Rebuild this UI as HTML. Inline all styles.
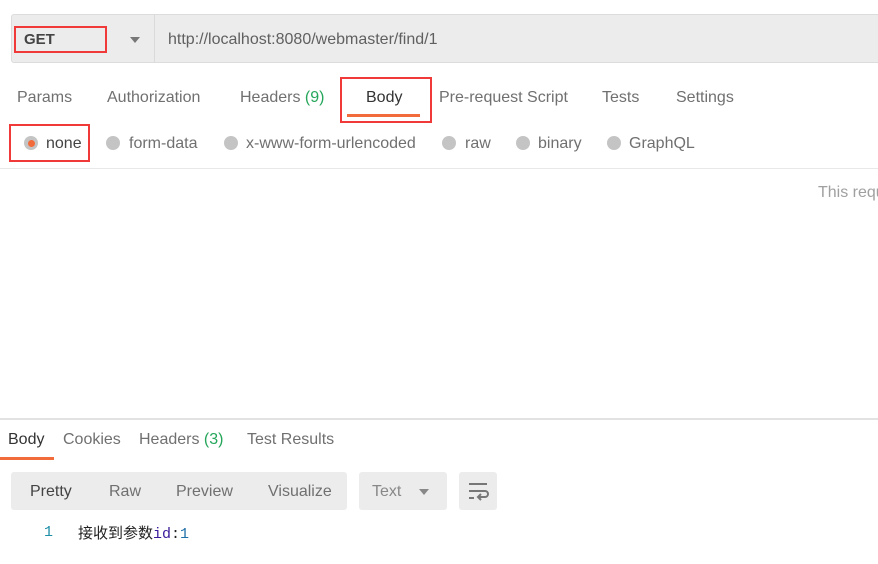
<!DOCTYPE html>
<html><head><meta charset="utf-8"><style>
body{margin:0;width:878px;height:564px;overflow:hidden;background:#fff;font-family:"Liberation Sans","Noto Sans CJK SC",sans-serif;color:#505050;position:relative}
.a{position:absolute;white-space:nowrap}
.t{font-size:16px;color:#707070}
.rb{position:absolute;border:2px solid #f03a3a;box-sizing:border-box}
.rad{position:absolute;width:14px;height:14px;border-radius:50%;background:#c4c4c4}
.g{color:#26a65b}
</style></head><body>
<div class="a" style="left:11px;top:14px;width:880px;height:49px;background:#ececec;border:1px solid #dcdcdc;border-radius:3px;box-sizing:border-box"></div>
<div class="a" style="left:154px;top:15px;width:1px;height:47px;background:#dadada"></div>
<div class="a" style="left:24px;top:31px;font-size:15px;font-weight:bold;color:#444">GET</div>
<div class="rb" style="left:14px;top:26px;width:93px;height:27px"></div>
<div class="a" style="left:130px;top:37px;width:0;height:0;border-left:5px solid transparent;border-right:5px solid transparent;border-top:6px solid #777"></div>
<div class="a" style="left:168px;top:31px;font-size:16px;color:#606060">http://localhost:8080/webmaster/find/1</div>

<div class="a t" style="left:17px;top:89px">Params</div>
<div class="a t" style="left:107px;top:89px">Authorization</div>
<div class="a t" style="left:240px;top:89px">Headers <span class="g">(9)</span></div>
<div class="a t" style="left:366px;top:89px;color:#333">Body</div>
<div class="a" style="left:347px;top:114px;width:73px;height:3px;background:#f26b3a"></div>
<div class="rb" style="left:340px;top:77px;width:92px;height:46px"></div>
<div class="a t" style="left:439px;top:89px">Pre-request Script</div>
<div class="a t" style="left:602px;top:89px">Tests</div>
<div class="a t" style="left:676px;top:89px">Settings</div>

<div class="rad" style="left:24px;top:136px"></div>
<div class="a" style="left:28px;top:140px;width:7px;height:7px;border-radius:50%;background:#f26b3a"></div>
<div class="a t" style="left:46px;top:135px;color:#444">none</div>
<div class="rb" style="left:9px;top:124px;width:81px;height:38px"></div>
<div class="rad" style="left:106px;top:136px"></div><div class="a t" style="left:129px;top:135px">form-data</div>
<div class="rad" style="left:224px;top:136px"></div><div class="a t" style="left:246px;top:135px">x-www-form-urlencoded</div>
<div class="rad" style="left:442px;top:136px"></div><div class="a t" style="left:465px;top:135px">raw</div>
<div class="rad" style="left:516px;top:136px"></div><div class="a t" style="left:538px;top:135px">binary</div>
<div class="rad" style="left:607px;top:136px"></div><div class="a t" style="left:629px;top:135px">GraphQL</div>
<div class="a" style="left:0;top:168px;width:878px;height:1px;background:#e8e8e8"></div>
<div class="a" style="left:818px;top:184px;font-size:16px;color:#a0a0a0">This requ</div>

<div class="a" style="left:0;top:418px;width:878px;height:2px;background:#e2e2e2"></div>
<div class="a t" style="left:8px;top:431px;color:#333">Body</div>
<div class="a" style="left:0;top:457px;width:54px;height:3px;background:#f26b3a"></div>
<div class="a t" style="left:63px;top:431px">Cookies</div>
<div class="a t" style="left:139px;top:431px">Headers <span class="g">(3)</span></div>
<div class="a t" style="left:247px;top:431px">Test Results</div>

<div class="a" style="left:11px;top:472px;width:336px;height:38px;background:#ececec;border-radius:3px"></div>
<div class="a t" style="left:30px;top:483px;color:#444">Pretty</div>
<div class="a t" style="left:109px;top:483px">Raw</div>
<div class="a t" style="left:176px;top:483px">Preview</div>
<div class="a t" style="left:268px;top:483px">Visualize</div>
<div class="a" style="left:359px;top:472px;width:88px;height:38px;background:#ececec;border-radius:3px"></div>
<div class="a t" style="left:372px;top:483px;color:#888">Text</div>
<div class="a" style="left:419px;top:489px;width:0;height:0;border-left:5px solid transparent;border-right:5px solid transparent;border-top:6px solid #888"></div>
<div class="a" style="left:459px;top:472px;width:38px;height:38px;background:#ececec;border-radius:3px"></div>
<svg class="a" style="left:467px;top:480px" width="22" height="22" viewBox="0 0 22 22"><path d="M2 4H20M2 11H18a3 3 0 0 1 0 6H12M2 18H7" stroke="#777" stroke-width="2" fill="none"/><path d="M14 14l-3 3 3 3" stroke="#777" stroke-width="2" fill="none"/></svg>

<div class="a" style="left:44px;top:524px;font-size:15px;font-family:'Liberation Mono',monospace;color:#1f8fa8">1</div>
<div class="a" style="left:78px;top:522px;font-size:15px;font-family:'Liberation Mono','Noto Sans CJK SC',monospace;color:#222">接收到参数<span style="color:#3a1a9a">id</span>:<span style="color:#1f6fa8">1</span></div>
</body></html>
